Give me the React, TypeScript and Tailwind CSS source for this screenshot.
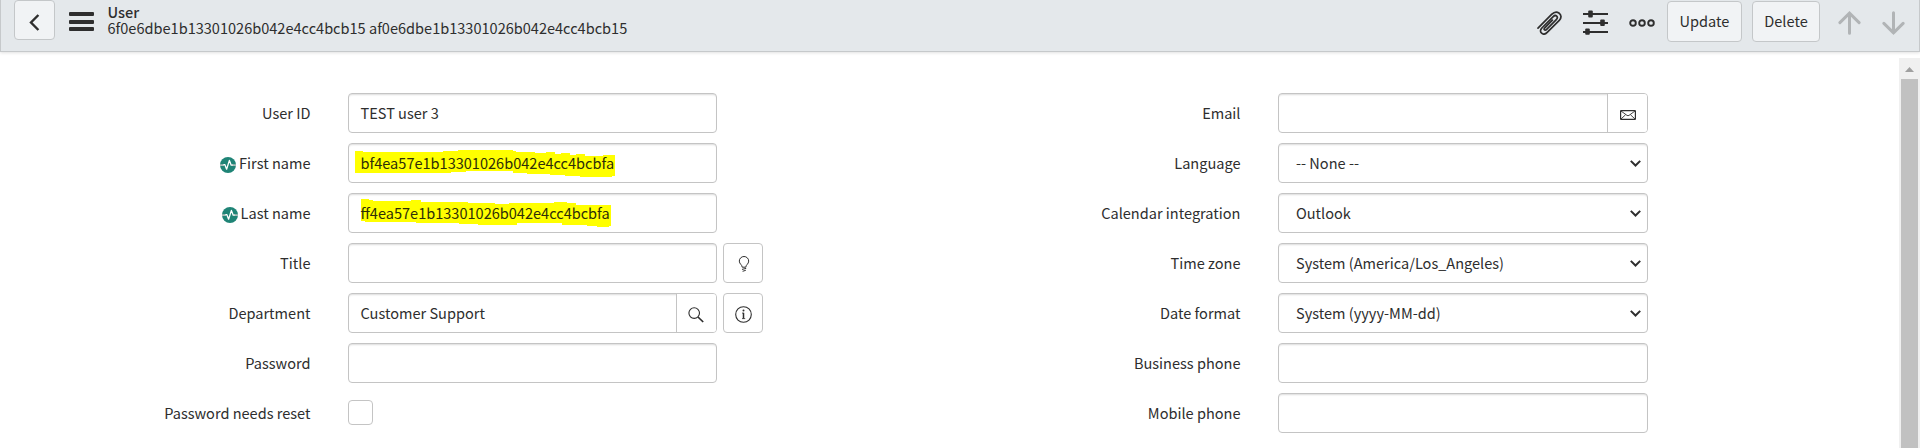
import React from "react";

type Icon = React.ReactNode;

const PulseIcon = () => (
  <svg width="16" height="16" viewBox="0 0 16 16" className="mt-[3px] shrink-0">
    <circle cx="8" cy="8" r="8" fill="#1f8476" />
    <path d="M0 8.2H4M12 8.2H16" stroke="#a9bdb9" strokeWidth="1.8" fill="none" />
    <path d="M3.4 7.6H4.8L6.6 12.2L9.4 3.4L11.2 8.2H12.6" stroke="#fff" strokeWidth="1.3" fill="none" strokeLinejoin="round" />
  </svg>
);

const BulbIcon = () => (
  <svg width="12" height="16" viewBox="0 0 12 16" fill="none" stroke="#2e2e2e" strokeWidth="1" className="mt-0.5 ml-px">
    <path d="M4.2 11.2C4.2 8.8 1.3 8 1.3 5.1A4.7 4.6 0 0 1 10.7 5.1C10.7 8 7.8 8.8 7.8 11.2Z" />
    <path d="M4 13.4L8.2 12.4M4.6 15.3L7.8 14.3" />
  </svg>
);

const SearchIcon = () => (
  <svg width="16" height="16" viewBox="0 0 16 16" fill="none" stroke="#2e2e2e" className="mr-px mt-[3px]">
    <circle cx="6.2" cy="6.1" r="5.3" strokeWidth="1.1" />
    <path d="M10 10L15.2 15" strokeWidth="1.7" />
  </svg>
);

const InfoIcon = () => (
  <svg width="17" height="17" viewBox="0 0 17 17" fill="none" stroke="#2e2e2e" className="mt-[3px]">
    <circle cx="8.5" cy="8.5" r="7.8" strokeWidth="1.1" />
    <path d="M8.5 6.8V12.6" strokeWidth="1.5" />
    <path d="M7 7.1H8.6M7 12.6H10.2" strokeWidth="0.8" />
    <circle cx="8.5" cy="4.4" r="1" fill="#2e2e2e" stroke="none" />
  </svg>
);

const MailIcon = () => (
  <svg width="16" height="10" viewBox="0 0 16 10" fill="none" stroke="#2e2e2e" className="mt-[3px]">
    <rect x="0.6" y="0.6" width="14.8" height="8.8" rx="0.5" strokeWidth="1.2" />
    <path d="M1 1L7 5.4Q8 6 9 5.4L15 1M1 9L5.6 4.7M15 9L10.4 4.7" strokeWidth="0.9" />
  </svg>
);

const Chevron = () => (
  <svg width="11" height="7" viewBox="0 0 11 7" fill="none" stroke="#2e2e2e" strokeWidth="2">
    <path d="M0.8 0.9L5.5 5.5L10.2 0.9" />
  </svg>
);

const PaperclipIcon = () => (
  <svg width="25" height="24" viewBox="0 0 25 24" fill="none" stroke="#2e2e2e" strokeWidth="1.7" strokeLinecap="round" strokeLinejoin="round">
    <path d="M1 17.2L14.6 3.4C16.8 1.2 19.6 0.3 21.9 2C24.6 4 24.6 7 22.3 9.4L10.2 21.4C8.4 23.2 6.2 23.6 4.6 22.2C3 20.8 3.2 18.8 4.9 17L16.2 5.6C17.4 4.4 18.8 4.3 19.7 5.2C20.6 6.1 20.4 7.5 19.3 8.6L9.4 18.6C8.6 19.4 7.8 19.3 7.4 18.8C6.9 18.2 7.1 17.5 7.8 16.8L15.4 9.2" />
  </svg>
);

const SlidersIcon = () => (
  <svg width="25" height="25" viewBox="0 0 25 25" fill="#2e2e2e">
    <path d="M0 3.1H25V4.9H0ZM0 12.1H25V13.9H0ZM0 21.1H25V22.9H0Z" />
    <rect x="5.2" y="0.5" width="4.6" height="7" rx="1" />
    <rect x="17.2" y="9.5" width="4.6" height="6.5" rx="1" />
    <rect x="2.2" y="18.5" width="4.6" height="6.3" rx="1" />
  </svg>
);

const DotsIcon = () => (
  <svg width="26" height="8" viewBox="0 0 26 8" fill="none" stroke="#2e2e2e" strokeWidth="1.9">
    <circle cx="4" cy="4" r="2.8" />
    <circle cx="13" cy="4" r="2.8" />
    <circle cx="22" cy="4" r="2.8" />
  </svg>
);

const Arrow = ({ down }: { down?: boolean }) => (
  <svg width="23" height="24" viewBox="0 0 23 24" fill="none" stroke="#b1b4b6" strokeWidth="3" strokeLinecap="round" className={down ? "rotate-180" : ""}>
    <path d="M11.5 2.2V22.3M1.9 11.6L11.5 2.2L21.1 11.6" />
  </svg>
);

const box = "rounded-[4px] border border-[#c4c4c4] bg-white";
const inset = "shadow-[inset_0_2px_2px_-1px_rgba(0,0,0,0.14)]";

function Field({ value, mark, markBox, icon, select, wide }: { value?: string; mark?: string; markBox?: string; icon?: Icon; select?: boolean; wide?: boolean }) {
  return (
    <div className={`relative flex h-10 ${wide ? "w-[370px]" : "w-[369px]"} shrink-0 items-center ${box} ${inset}`}>
      {mark && (
        <svg className="absolute -left-px -top-px" width="369" height="40" viewBox={markBox}>
          <polygon points={mark} fill="#ffff00" />
        </svg>
      )}
      <span className={`relative flex-1 whitespace-pre pb-0.5 ${select ? "pl-[17px]" : "pl-[11.5px]"} ${mark ? "text-[#2e2e08]" : ""}`}>{value}</span>
      {icon && <span className="flex h-full w-10 items-center justify-center rounded-r-[3px] border-l border-[#c4c4c4] bg-white">{icon}</span>}
      {select && <span className="mr-1.5"><Chevron /></span>}
    </div>
  );
}

function Row({ label, pulse, children }: { label: string; pulse?: boolean; children: React.ReactNode }) {
  return (
    <div className="flex h-10 items-center">
      <div className="mr-[37.5px] flex w-[310.5px] shrink-0 items-center justify-end gap-[3px] whitespace-nowrap">
        {pulse && <PulseIcon />}
        <span className="pb-0.5">{label}</span>
      </div>
      {children}
    </div>
  );
}

const SideButton = ({ children }: { children: Icon }) => (
  <button className={`ml-1.5 flex h-10 w-10 items-center justify-center ${box}`}>{children}</button>
);

const firstMark =
  "45,213 69,213 69,216 309,216 309,213 354,213 354,210 519,210 519,213 528,213 528,216 585,216 585,219 618,219 618,216 645,216 645,222 663,222 663,219 690,219 690,225 708,225 708,222 735,222 735,228 789,228 789,225 825,225 825,288 816,288 816,291 720,291 720,288 675,288 675,285 630,285 630,282 561,282 561,279 519,279 519,273 378,273 378,276 333,276 333,279 45,279";
const lastMark =
  "63,357 87,357 87,360 99,360 99,363 213,363 213,360 243,360 243,366 384,366 384,369 465,369 465,372 507,372 507,369 642,369 642,366 681,366 681,369 708,369 708,375 813,375 813,438 807,438 807,441 771,441 771,438 741,438 741,435 666,435 666,429 531,429 531,435 414,435 414,432 357,432 357,429 228,429 228,426 75,426 75,423 63,423";

export default function App() {
  return (
    <div className="flex h-[448px] w-[1920px] flex-col overflow-hidden bg-white text-[14.56px] leading-[17px] text-[#2e2e2e] [font-family:'Noto_Sans_CJK_SC',sans-serif]">
      <header className="flex h-[52px] shrink-0 items-start border-x border-b border-[#c6c9cb] bg-[#e4e8eb] pl-[13px] pr-[14px] shadow-[0_1px_3px_rgba(0,0,0,0.12)]">
        <button className="flex h-10 w-[41px] items-center justify-center rounded-[4px] border border-[#c4c7c9] bg-[#f1f3f5]">
          <svg width="11" height="17" viewBox="0 0 11 17" fill="none" stroke="#2e2e2e" strokeWidth="2.4" className="mt-1">
            <path d="M9.4 1L2 8.5L9.4 16" />
          </svg>
        </button>
        <div className="ml-3.5 mt-3 flex w-[25px] flex-col gap-[3.5px]">
          <span className="h-1 rounded-[1px] bg-[#2e2e2e]" />
          <span className="h-1 rounded-[1px] bg-[#2e2e2e]" />
          <span className="h-1 rounded-[1px] bg-[#2e2e2e]" />
        </div>
        <div className="ml-[13.5px] mt-1 flex-1 whitespace-nowrap leading-4">
          <div className="font-medium">User</div>
          <div>6f0e6dbe1b13301026b042e4cc4bcb15 af0e6dbe1b13301026b042e4cc4bcb15</div>
        </div>
        <div className="mt-px flex h-[41px] items-center">
          <span className="mt-0.5"><PaperclipIcon /></span>
          <span className="ml-[21px] mt-0.5"><SlidersIcon /></span>
          <span className="ml-[21px] mt-0.5"><DotsIcon /></span>
          <button className="ml-3 h-[41px] w-[75px] rounded-[4px] border border-[#c4c7c9] bg-[#f1f3f5] pb-0.5">Update</button>
          <button className="ml-2.5 h-[41px] w-[68px] rounded-[4px] border border-[#c4c7c9] bg-[#f1f3f5] pb-0.5">Delete</button>
          <span className="ml-[18px] mt-0.5"><Arrow /></span>
          <span className="ml-[21px] mt-0.5"><Arrow down /></span>
        </div>
      </header>

      <div className="flex min-h-0 flex-1">
        <main className="flex flex-1 pt-[41px]">
          <section className="flex w-[930px] flex-col gap-2.5">
            <Row label="User ID"><Field value="TEST user 3" /></Row>
            <Row label="First name" pulse><Field value="bf4ea57e1b13301026b042e4cc4bcbfa" mark={firstMark} markBox="24 189 1107 120" /></Row>
            <Row label="Last name" pulse><Field value="ff4ea57e1b13301026b042e4cc4bcbfa" mark={lastMark} markBox="24 339 1107 120" /></Row>
            <Row label="Title"><Field /><SideButton><BulbIcon /></SideButton></Row>
            <Row label="Department"><Field value="Customer Support" icon={<SearchIcon />} /><SideButton><InfoIcon /></SideButton></Row>
            <Row label="Password"><Field /></Row>
            <Row label="Password needs reset"><span className={`mb-px h-[25px] w-[25px] ${box}`} /></Row>
          </section>
          <section className="flex flex-col gap-2.5">
            <Row label="Email"><Field wide icon={<MailIcon />} /></Row>
            <Row label="Language"><Field wide value="-- None --" select /></Row>
            <Row label="Calendar integration"><Field wide value="Outlook" select /></Row>
            <Row label="Time zone"><Field wide value="System (America/Los_Angeles)" select /></Row>
            <Row label="Date format"><Field wide value="System (yyyy-MM-dd)" select /></Row>
            <Row label="Business phone"><Field wide /></Row>
            <Row label="Mobile phone"><Field wide /></Row>
          </section>
        </main>
        <div className="mt-1.5 flex w-[21px] flex-col items-center bg-[#f0f0f0]">
          <svg width="9" height="5" viewBox="0 0 9 5" fill="#a0a0a0" className="mt-[9px]">
            <path d="M4.5 0L9 5H0Z" />
          </svg>
          <div className="mt-[7px] w-[17px] flex-1 bg-[#c1c1c1]" />
        </div>
      </div>
    </div>
  );
}
